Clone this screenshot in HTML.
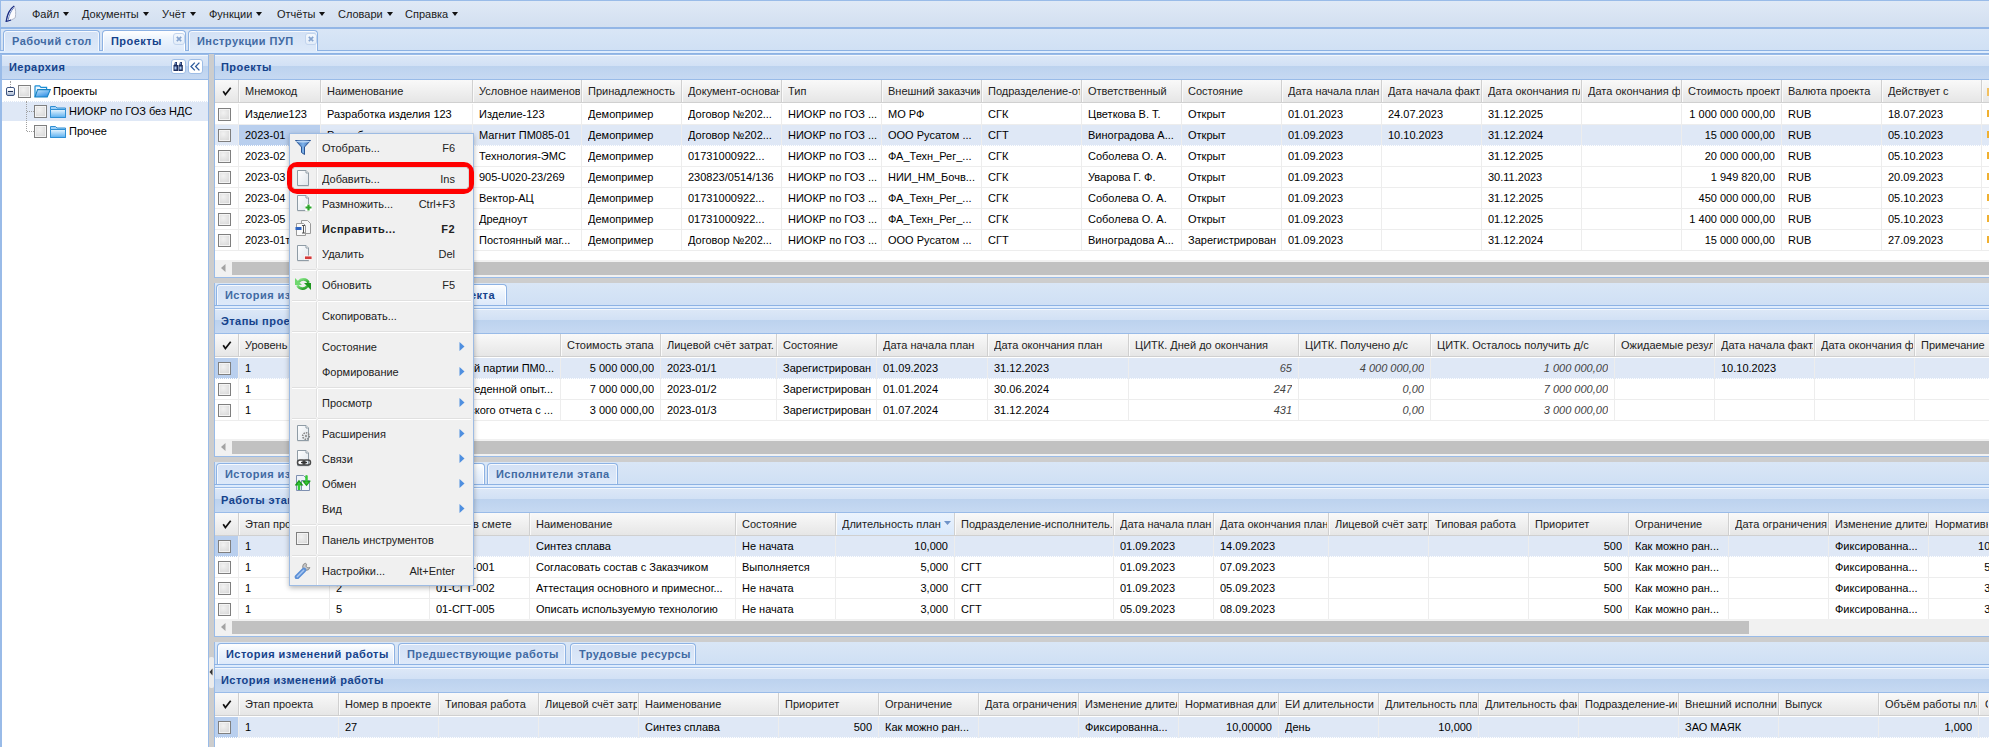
<!DOCTYPE html><html><head><meta charset="utf-8"><style>
*{margin:0;padding:0;box-sizing:border-box}
html,body{width:1989px;height:747px;overflow:hidden;background:#cdcdcd;font-family:"Liberation Sans",sans-serif;font-size:11px;color:#000}
body>div{position:absolute}
.t{position:absolute;white-space:nowrap;line-height:13px;height:13px;overflow:hidden}
.b{font-weight:bold;letter-spacing:0.45px}
.hdr{background:linear-gradient(#dde8f7 0,#d2e1f5 44%,#bcd2ee 45%,#c6d9f2 100%);border-top:1px solid #99bbe8;border-bottom:1px solid #99bbe8;box-shadow:inset 0 1px 0 #f3f7fc}
.ghd{background:linear-gradient(#fafafa,#e8e8e8)}
.cb{position:absolute;width:13px;height:13px;border:1px solid #7f7f7f;background:radial-gradient(circle at 40% 35%,#f2f2f2,#d6d6d6 90%);box-shadow:inset 0 0 0 1px #f4f4f4}
.arr{display:inline-block;width:0;height:0;border-left:3.5px solid transparent;border-right:3.5px solid transparent;border-top:4px solid #111;margin-left:4px;vertical-align:2px}
.tab{position:absolute;border:1px solid #8db2e3;border-bottom:none;border-radius:4px 4px 0 0;background:linear-gradient(#d3e1f5,#dde9f9);box-shadow:inset 0 1px 0 #f7fafe,inset 1px 0 0 #f3f7fd,inset -1px 0 0 #f3f7fd}
.tab.act{background:linear-gradient(#ffffff 0,#eef5fd 35%,#dde9fa 100%);box-shadow:inset 1px 0 0 #fff,inset -1px 0 0 #fff}
.tabt{position:absolute;white-space:nowrap;line-height:13px;font-weight:bold;letter-spacing:0.45px;color:#416aa3}
.act .tabt{color:#15428b}
.strip{background:linear-gradient(#d7e4f5,#cfdff4)}
.sb{background:#f1f1f1}
.thumb{background:#c1c1c1}
</style></head><body>
<div style="left:0px;top:0px;width:1989px;height:29px;background:linear-gradient(#dfe9f6,#d2dff0);border:1px solid #99bbe8;border-bottom:2px solid #93b6e6;border-right:none"></div>
<svg style="position:absolute;left:0;top:0" width="24" height="26" viewBox="0 0 24 26"><path d="M14.2 6 C10.5 8.5 7.2 14 6.2 21.3 C9.5 20.8 13 19.6 15.3 17.6 C15.9 13.5 15.9 9.5 14.2 6 Z" fill="#fbfbfe" stroke="#a9b1c4" stroke-width="0.9"/><path d="M14.2 6 C10.5 8.5 7.2 14 6.2 21.3 C8 21 9.5 20.6 11 20" fill="none" stroke="#1b2c84" stroke-width="1.3"/><path d="M13.6 8 C11 11 9 15 8.3 19.8" fill="none" stroke="#5877b8" stroke-width="0.9"/></svg>
<div class="t" style="left:32px;top:8px;text-align:left;color:#1a1a1a;overflow:visible">Файл<span class="arr"></span></div>
<div class="t" style="left:82px;top:8px;text-align:left;color:#1a1a1a;overflow:visible">Документы<span class="arr"></span></div>
<div class="t" style="left:162px;top:8px;text-align:left;color:#1a1a1a;overflow:visible">Учёт<span class="arr"></span></div>
<div class="t" style="left:209px;top:8px;text-align:left;color:#1a1a1a;overflow:visible">Функции<span class="arr"></span></div>
<div class="t" style="left:277px;top:8px;text-align:left;color:#1a1a1a;overflow:visible">Отчёты<span class="arr"></span></div>
<div class="t" style="left:338px;top:8px;text-align:left;color:#1a1a1a;overflow:visible">Словари<span class="arr"></span></div>
<div class="t" style="left:405px;top:8px;text-align:left;color:#1a1a1a;overflow:visible">Справка<span class="arr"></span></div>
<div style="left:0px;top:29px;width:1989px;height:25px;background:linear-gradient(#d9e6f6,#cedff4);border-left:1px solid #99bbe8"></div>
<div style="left:0px;top:50px;width:1989px;height:1px;background:#8db2e3"></div>
<div style="left:0px;top:51px;width:1989px;height:2px;background:#deecfd"></div>
<div style="left:0px;top:53px;width:1989px;height:1px;background:#8db2e3"></div>
<div class="tab" style="left:3px;top:30px;width:97px;height:21px"><div class="tabt" style="left:8px;top:4px">Рабочий стол</div></div>
<div class="tab act" style="left:102px;top:30px;width:84px;height:21px"><div class="tabt" style="left:8px;top:4px">Проекты</div><div style="position:absolute;left:70px;top:2px;width:12px;height:12px;border:1px solid #c3d5ee;border-radius:3px;background:linear-gradient(#f4f8fd,#e3edf9)"></div><svg style="position:absolute;left:73px;top:5px" width="6" height="6" viewBox="0 0 6 6"><path d="M0.8 0.8 L5.2 5.2 M5.2 0.8 L0.8 5.2" stroke="#86a4cf" stroke-width="1.7"/></svg></div>
<div class="tab" style="left:188px;top:30px;width:130px;height:21px"><div class="tabt" style="left:8px;top:4px">Инструкции ПУП</div><div style="position:absolute;left:116px;top:2px;width:12px;height:12px;border:1px solid #c3d5ee;border-radius:3px;background:linear-gradient(#f4f8fd,#e3edf9)"></div><svg style="position:absolute;left:119px;top:5px" width="6" height="6" viewBox="0 0 6 6"><path d="M0.8 0.8 L5.2 5.2 M5.2 0.8 L0.8 5.2" stroke="#86a4cf" stroke-width="1.7"/></svg></div>
<div style="left:0px;top:54px;width:209px;height:693px;background:#fff;border-left:2px solid #99bbe8;border-right:1px solid #99bbe8"></div>
<div class="hdr" style="left:0px;top:54px;width:209px;height:26px;border-left:2px solid #99bbe8;border-right:1px solid #99bbe8"></div>
<div class="t b" style="left:9px;top:61px;text-align:left;color:#15428b">Иерархия</div>
<div style="left:171px;top:59px;width:15px;height:15px;background:#fff;border:1px solid #9ebde6;border-radius:3px"></div>
<div style="left:188px;top:59px;width:15px;height:15px;background:#fff;border:1px solid #9ebde6;border-radius:3px"></div>
<svg style="position:absolute;left:173px;top:61px" width="11" height="11" viewBox="0 0 11 11"><path d="M2 1 H4 V4 H5 V10 H0.5 V4 H1.2 Z" fill="#1d2d5c"/><path d="M7 1 H9 V4 H9.8 V10 H5.5 V4 H6.2 Z" fill="#1d2d5c"/><rect x="1.5" y="5.5" width="2" height="3" fill="#a9c8f2"/><rect x="6.5" y="5.5" width="2" height="3" fill="#a9c8f2"/><rect x="2" y="1.5" width="1.2" height="2" fill="#6f8fc8"/><rect x="7" y="1.5" width="1.2" height="2" fill="#6f8fc8"/></svg>
<svg style="position:absolute;left:190px;top:62px" width="11" height="9" viewBox="0 0 11 9"><path d="M4.8 0.6 L1 4.5 L4.8 8.4 M9.4 0.6 L5.6 4.5 L9.4 8.4" fill="none" stroke="#2f5c9c" stroke-width="1.3"/></svg>
<div style="left:2px;top:101px;width:206px;height:20px;background:#dfe8f6;border-top:1px dotted #fff"></div>
<div style="left:10px;top:81px;width:1px;height:6px;border-left:1px dotted #a0a0a0"></div>
<div style="left:26px;top:101px;width:1px;height:30px;border-left:1px dotted #a0a0a0"></div>
<div style="left:27px;top:111px;width:7px;height:1px;border-top:1px dotted #a0a0a0"></div>
<div style="left:27px;top:131px;width:7px;height:1px;border-top:1px dotted #a0a0a0"></div>
<div style="left:6px;top:87px;width:9px;height:9px;border:1px solid #3f5682;background:linear-gradient(#ffffff 20%,#a9b9d2);border-radius:2px"><div style="position:absolute;left:1px;top:3px;width:5px;height:1px;background:#1d2f55"></div></div>
<div class="cb" style="left:18px;top:85px"></div>
<svg style="position:absolute;left:34px;top:85px" width="17" height="13" viewBox="0 0 17 13"><defs><linearGradient id="fo" x1="0" y1="0" x2="0.6" y2="1"><stop offset="0" stop-color="#cbe9fd"/><stop offset="1" stop-color="#3592e6"/></linearGradient></defs><path d="M1 12 V1.6 Q1 0.8 1.8 0.8 H5.6 L7 2.3 H12.6 V4.6" fill="#eaf5fe" stroke="#1b8ed6" stroke-width="1.2"/><path d="M1 12 L3.6 4.6 H16.3 L13.2 12 Z" fill="url(#fo)" stroke="#1683c4" stroke-width="1.1"/></svg>
<div class="t" style="left:53px;top:85px;text-align:left;">Проекты</div>
<div class="cb" style="left:34px;top:105px"></div>
<svg style="position:absolute;left:50px;top:105px" width="16" height="13" viewBox="0 0 16 13"><path d="M0.5 1.5 h5 l1.5 1.5 h8.5 v9.5 h-15 z" fill="#9fd0f7" stroke="#2f8fd4" stroke-width="1"/><path d="M0.5 4.5 h15 v8 h-15 z" fill="url(#fg)" stroke="#2f8fd4" stroke-width="1"/><defs><linearGradient id="fg" x1="0" y1="0" x2="0" y2="1"><stop offset="0" stop-color="#e9f5fe"/><stop offset="1" stop-color="#5ab0f0"/></linearGradient></defs></svg>
<div class="t" style="left:69px;top:105px;text-align:left;">НИОКР по ГОЗ без НДС</div>
<div class="cb" style="left:34px;top:125px"></div>
<svg style="position:absolute;left:50px;top:125px" width="16" height="13" viewBox="0 0 16 13"><path d="M0.5 1.5 h5 l1.5 1.5 h8.5 v9.5 h-15 z" fill="#9fd0f7" stroke="#2f8fd4" stroke-width="1"/><path d="M0.5 4.5 h15 v8 h-15 z" fill="url(#fg)" stroke="#2f8fd4" stroke-width="1"/><defs><linearGradient id="fg" x1="0" y1="0" x2="0" y2="1"><stop offset="0" stop-color="#e9f5fe"/><stop offset="1" stop-color="#5ab0f0"/></linearGradient></defs></svg>
<div class="t" style="left:69px;top:125px;text-align:left;">Прочее</div>
<div style="left:209px;top:54px;width:5px;height:693px;background:#cdcdcd"></div>
<div style="left:214px;top:54px;width:1775px;height:224px;background:#fff;border-left:1px solid #99bbe8;border-bottom:1px solid #99bbe8"></div>
<div class="hdr" style="left:214px;top:54px;width:1775px;height:26px;border-left:1px solid #99bbe8"></div>
<div class="t b" style="left:221px;top:61px;text-align:left;color:#15428b">Проекты</div>
<div style="left:215px;top:80px;width:1774px;height:23px;background:linear-gradient(#f9f9f9,#e6e6e6);border-bottom:1px solid #d0d0d0"></div>
<div style="left:238px;top:80px;width:1px;height:22px;background:#d0d0d0;box-shadow:1px 0 0 #fafafa"></div>
<div style="left:320px;top:80px;width:1px;height:22px;background:#d0d0d0;box-shadow:1px 0 0 #fafafa"></div>
<div style="left:472px;top:80px;width:1px;height:22px;background:#d0d0d0;box-shadow:1px 0 0 #fafafa"></div>
<div style="left:581px;top:80px;width:1px;height:22px;background:#d0d0d0;box-shadow:1px 0 0 #fafafa"></div>
<div style="left:681px;top:80px;width:1px;height:22px;background:#d0d0d0;box-shadow:1px 0 0 #fafafa"></div>
<div style="left:781px;top:80px;width:1px;height:22px;background:#d0d0d0;box-shadow:1px 0 0 #fafafa"></div>
<div style="left:881px;top:80px;width:1px;height:22px;background:#d0d0d0;box-shadow:1px 0 0 #fafafa"></div>
<div style="left:981px;top:80px;width:1px;height:22px;background:#d0d0d0;box-shadow:1px 0 0 #fafafa"></div>
<div style="left:1081px;top:80px;width:1px;height:22px;background:#d0d0d0;box-shadow:1px 0 0 #fafafa"></div>
<div style="left:1181px;top:80px;width:1px;height:22px;background:#d0d0d0;box-shadow:1px 0 0 #fafafa"></div>
<div style="left:1281px;top:80px;width:1px;height:22px;background:#d0d0d0;box-shadow:1px 0 0 #fafafa"></div>
<div style="left:1381px;top:80px;width:1px;height:22px;background:#d0d0d0;box-shadow:1px 0 0 #fafafa"></div>
<div style="left:1481px;top:80px;width:1px;height:22px;background:#d0d0d0;box-shadow:1px 0 0 #fafafa"></div>
<div style="left:1581px;top:80px;width:1px;height:22px;background:#d0d0d0;box-shadow:1px 0 0 #fafafa"></div>
<div style="left:1681px;top:80px;width:1px;height:22px;background:#d0d0d0;box-shadow:1px 0 0 #fafafa"></div>
<div style="left:1781px;top:80px;width:1px;height:22px;background:#d0d0d0;box-shadow:1px 0 0 #fafafa"></div>
<div style="left:1881px;top:80px;width:1px;height:22px;background:#d0d0d0;box-shadow:1px 0 0 #fafafa"></div>
<div style="left:1981px;top:80px;width:1px;height:22px;background:#d0d0d0;box-shadow:1px 0 0 #fafafa"></div>
<svg style="position:absolute;left:222px;top:86px" width="10" height="10" viewBox="0 0 10 10"><path d="M1.2 5.2 L3.4 8.5 L8.7 1.8" fill="none" stroke="#111" stroke-width="1.7"/></svg>
<div class="t" style="left:245px;top:85px;width:74px;text-align:left;color:#222">Мнемокод</div>
<div class="t" style="left:327px;top:85px;width:144px;text-align:left;color:#222">Наименование</div>
<div class="t" style="left:479px;top:85px;width:101px;text-align:left;color:#222">Условное наименование</div>
<div class="t" style="left:588px;top:85px;width:92px;text-align:left;color:#222">Принадлежность</div>
<div class="t" style="left:688px;top:85px;width:92px;text-align:left;color:#222">Документ-основание</div>
<div class="t" style="left:788px;top:85px;width:92px;text-align:left;color:#222">Тип</div>
<div class="t" style="left:888px;top:85px;width:92px;text-align:left;color:#222">Внешний заказчик</div>
<div class="t" style="left:988px;top:85px;width:92px;text-align:left;color:#222">Подразделение-ответственный</div>
<div class="t" style="left:1088px;top:85px;width:92px;text-align:left;color:#222">Ответственный</div>
<div class="t" style="left:1188px;top:85px;width:92px;text-align:left;color:#222">Состояние</div>
<div class="t" style="left:1288px;top:85px;width:92px;text-align:left;color:#222">Дата начала план.</div>
<div class="t" style="left:1388px;top:85px;width:92px;text-align:left;color:#222">Дата начала факт.</div>
<div class="t" style="left:1488px;top:85px;width:92px;text-align:left;color:#222">Дата окончания план</div>
<div class="t" style="left:1588px;top:85px;width:92px;text-align:left;color:#222">Дата окончания факт</div>
<div class="t" style="left:1688px;top:85px;width:92px;text-align:left;color:#222">Стоимость проекта</div>
<div class="t" style="left:1788px;top:85px;width:92px;text-align:left;color:#222">Валюта проекта</div>
<div class="t" style="left:1888px;top:85px;width:92px;text-align:left;color:#222">Действует с</div>
<div style="left:215px;top:104px;width:1774px;height:21px;border-bottom:1px solid #ededed"></div>
<div class="cb" style="left:218px;top:108px"></div>
<div class="t" style="left:245px;top:108px;width:74px;text-align:left;color:#000">Изделие123</div>
<div class="t" style="left:327px;top:108px;width:144px;text-align:left;color:#000">Разработка изделия 123</div>
<div class="t" style="left:479px;top:108px;width:101px;text-align:left;color:#000">Изделие-123</div>
<div class="t" style="left:588px;top:108px;width:92px;text-align:left;color:#000">Демопример</div>
<div class="t" style="left:688px;top:108px;width:92px;text-align:left;color:#000">Договор №202...</div>
<div class="t" style="left:788px;top:108px;width:92px;text-align:left;color:#000">НИОКР по ГОЗ ...</div>
<div class="t" style="left:888px;top:108px;width:92px;text-align:left;color:#000">МО РФ</div>
<div class="t" style="left:988px;top:108px;width:92px;text-align:left;color:#000">СГК</div>
<div class="t" style="left:1088px;top:108px;width:92px;text-align:left;color:#000">Цветкова В. Т.</div>
<div class="t" style="left:1188px;top:108px;width:92px;text-align:left;color:#000">Открыт</div>
<div class="t" style="left:1288px;top:108px;width:92px;text-align:left;color:#000">01.01.2023</div>
<div class="t" style="left:1388px;top:108px;width:92px;text-align:left;color:#000">24.07.2023</div>
<div class="t" style="left:1488px;top:108px;width:92px;text-align:left;color:#000">31.12.2025</div>
<div class="t" style="left:1682px;top:108px;width:93px;text-align:right;color:#000">1 000 000 000,00</div>
<div class="t" style="left:1788px;top:108px;width:92px;text-align:left;color:#000">RUB</div>
<div class="t" style="left:1888px;top:108px;width:92px;text-align:left;color:#000">18.07.2023</div>
<div style="left:215px;top:125px;width:1774px;height:21px;background:#dfe8f6;border-bottom:1px dotted #ffffff"></div>
<div style="left:239px;top:125px;width:81px;height:21px;background:#b9cfee;border-bottom:1px dotted #ffffff"></div>
<div class="cb" style="left:218px;top:129px"></div>
<div class="t" style="left:245px;top:129px;width:74px;text-align:left;color:#000">2023-01</div>
<div class="t" style="left:327px;top:129px;width:144px;text-align:left;color:#000">Разработка магнитов</div>
<div class="t" style="left:479px;top:129px;width:101px;text-align:left;color:#000">Магнит ПМ085-01</div>
<div class="t" style="left:588px;top:129px;width:92px;text-align:left;color:#000">Демопример</div>
<div class="t" style="left:688px;top:129px;width:92px;text-align:left;color:#000">Договор №202...</div>
<div class="t" style="left:788px;top:129px;width:92px;text-align:left;color:#000">НИОКР по ГОЗ ...</div>
<div class="t" style="left:888px;top:129px;width:92px;text-align:left;color:#000">ООО Русатом ...</div>
<div class="t" style="left:988px;top:129px;width:92px;text-align:left;color:#000">СГТ</div>
<div class="t" style="left:1088px;top:129px;width:92px;text-align:left;color:#000">Виноградова А...</div>
<div class="t" style="left:1188px;top:129px;width:92px;text-align:left;color:#000">Открыт</div>
<div class="t" style="left:1288px;top:129px;width:92px;text-align:left;color:#000">01.09.2023</div>
<div class="t" style="left:1388px;top:129px;width:92px;text-align:left;color:#000">10.10.2023</div>
<div class="t" style="left:1488px;top:129px;width:92px;text-align:left;color:#000">31.12.2024</div>
<div class="t" style="left:1682px;top:129px;width:93px;text-align:right;color:#000">15 000 000,00</div>
<div class="t" style="left:1788px;top:129px;width:92px;text-align:left;color:#000">RUB</div>
<div class="t" style="left:1888px;top:129px;width:92px;text-align:left;color:#000">05.10.2023</div>
<div style="left:215px;top:146px;width:1774px;height:21px;border-bottom:1px solid #ededed"></div>
<div class="cb" style="left:218px;top:150px"></div>
<div class="t" style="left:245px;top:150px;width:74px;text-align:left;color:#000">2023-02</div>
<div class="t" style="left:327px;top:150px;width:144px;text-align:left;color:#000">Технология</div>
<div class="t" style="left:479px;top:150px;width:101px;text-align:left;color:#000">Технология-ЭМС</div>
<div class="t" style="left:588px;top:150px;width:92px;text-align:left;color:#000">Демопример</div>
<div class="t" style="left:688px;top:150px;width:92px;text-align:left;color:#000">01731000922...</div>
<div class="t" style="left:788px;top:150px;width:92px;text-align:left;color:#000">НИОКР по ГОЗ ...</div>
<div class="t" style="left:888px;top:150px;width:92px;text-align:left;color:#000">ФА_Техн_Рег_...</div>
<div class="t" style="left:988px;top:150px;width:92px;text-align:left;color:#000">СГК</div>
<div class="t" style="left:1088px;top:150px;width:92px;text-align:left;color:#000">Соболева О. А.</div>
<div class="t" style="left:1188px;top:150px;width:92px;text-align:left;color:#000">Открыт</div>
<div class="t" style="left:1288px;top:150px;width:92px;text-align:left;color:#000">01.09.2023</div>
<div class="t" style="left:1488px;top:150px;width:92px;text-align:left;color:#000">31.12.2025</div>
<div class="t" style="left:1682px;top:150px;width:93px;text-align:right;color:#000">20 000 000,00</div>
<div class="t" style="left:1788px;top:150px;width:92px;text-align:left;color:#000">RUB</div>
<div class="t" style="left:1888px;top:150px;width:92px;text-align:left;color:#000">05.10.2023</div>
<div style="left:215px;top:167px;width:1774px;height:21px;border-bottom:1px solid #ededed"></div>
<div class="cb" style="left:218px;top:171px"></div>
<div class="t" style="left:245px;top:171px;width:74px;text-align:left;color:#000">2023-03</div>
<div class="t" style="left:327px;top:171px;width:144px;text-align:left;color:#000">Разработка</div>
<div class="t" style="left:479px;top:171px;width:101px;text-align:left;color:#000">905-U020-23/269</div>
<div class="t" style="left:588px;top:171px;width:92px;text-align:left;color:#000">Демопример</div>
<div class="t" style="left:688px;top:171px;width:92px;text-align:left;color:#000">230823/0514/136</div>
<div class="t" style="left:788px;top:171px;width:92px;text-align:left;color:#000">НИОКР по ГОЗ ...</div>
<div class="t" style="left:888px;top:171px;width:92px;text-align:left;color:#000">НИИ_НМ_Бочв...</div>
<div class="t" style="left:988px;top:171px;width:92px;text-align:left;color:#000">СГК</div>
<div class="t" style="left:1088px;top:171px;width:92px;text-align:left;color:#000">Уварова Г. Ф.</div>
<div class="t" style="left:1188px;top:171px;width:92px;text-align:left;color:#000">Открыт</div>
<div class="t" style="left:1288px;top:171px;width:92px;text-align:left;color:#000">01.09.2023</div>
<div class="t" style="left:1488px;top:171px;width:92px;text-align:left;color:#000">30.11.2023</div>
<div class="t" style="left:1682px;top:171px;width:93px;text-align:right;color:#000">1 949 820,00</div>
<div class="t" style="left:1788px;top:171px;width:92px;text-align:left;color:#000">RUB</div>
<div class="t" style="left:1888px;top:171px;width:92px;text-align:left;color:#000">20.09.2023</div>
<div style="left:215px;top:188px;width:1774px;height:21px;border-bottom:1px solid #ededed"></div>
<div class="cb" style="left:218px;top:192px"></div>
<div class="t" style="left:245px;top:192px;width:74px;text-align:left;color:#000">2023-04</div>
<div class="t" style="left:327px;top:192px;width:144px;text-align:left;color:#000">Разработка</div>
<div class="t" style="left:479px;top:192px;width:101px;text-align:left;color:#000">Вектор-АЦ</div>
<div class="t" style="left:588px;top:192px;width:92px;text-align:left;color:#000">Демопример</div>
<div class="t" style="left:688px;top:192px;width:92px;text-align:left;color:#000">01731000922...</div>
<div class="t" style="left:788px;top:192px;width:92px;text-align:left;color:#000">НИОКР по ГОЗ ...</div>
<div class="t" style="left:888px;top:192px;width:92px;text-align:left;color:#000">ФА_Техн_Рег_...</div>
<div class="t" style="left:988px;top:192px;width:92px;text-align:left;color:#000">СГК</div>
<div class="t" style="left:1088px;top:192px;width:92px;text-align:left;color:#000">Соболева О. А.</div>
<div class="t" style="left:1188px;top:192px;width:92px;text-align:left;color:#000">Открыт</div>
<div class="t" style="left:1288px;top:192px;width:92px;text-align:left;color:#000">01.09.2023</div>
<div class="t" style="left:1488px;top:192px;width:92px;text-align:left;color:#000">31.12.2025</div>
<div class="t" style="left:1682px;top:192px;width:93px;text-align:right;color:#000">450 000 000,00</div>
<div class="t" style="left:1788px;top:192px;width:92px;text-align:left;color:#000">RUB</div>
<div class="t" style="left:1888px;top:192px;width:92px;text-align:left;color:#000">05.10.2023</div>
<div style="left:215px;top:209px;width:1774px;height:21px;border-bottom:1px solid #ededed"></div>
<div class="cb" style="left:218px;top:213px"></div>
<div class="t" style="left:245px;top:213px;width:74px;text-align:left;color:#000">2023-05</div>
<div class="t" style="left:327px;top:213px;width:144px;text-align:left;color:#000">Разработка</div>
<div class="t" style="left:479px;top:213px;width:101px;text-align:left;color:#000">Дредноут</div>
<div class="t" style="left:588px;top:213px;width:92px;text-align:left;color:#000">Демопример</div>
<div class="t" style="left:688px;top:213px;width:92px;text-align:left;color:#000">01731000922...</div>
<div class="t" style="left:788px;top:213px;width:92px;text-align:left;color:#000">НИОКР по ГОЗ ...</div>
<div class="t" style="left:888px;top:213px;width:92px;text-align:left;color:#000">ФА_Техн_Рег_...</div>
<div class="t" style="left:988px;top:213px;width:92px;text-align:left;color:#000">СГК</div>
<div class="t" style="left:1088px;top:213px;width:92px;text-align:left;color:#000">Соболева О. А.</div>
<div class="t" style="left:1188px;top:213px;width:92px;text-align:left;color:#000">Открыт</div>
<div class="t" style="left:1288px;top:213px;width:92px;text-align:left;color:#000">01.09.2023</div>
<div class="t" style="left:1488px;top:213px;width:92px;text-align:left;color:#000">01.12.2025</div>
<div class="t" style="left:1682px;top:213px;width:93px;text-align:right;color:#000">1 400 000 000,00</div>
<div class="t" style="left:1788px;top:213px;width:92px;text-align:left;color:#000">RUB</div>
<div class="t" style="left:1888px;top:213px;width:92px;text-align:left;color:#000">05.10.2023</div>
<div style="left:215px;top:230px;width:1774px;height:21px;border-bottom:1px solid #ededed"></div>
<div class="cb" style="left:218px;top:234px"></div>
<div class="t" style="left:245px;top:234px;width:74px;text-align:left;color:#000">2023-01т</div>
<div class="t" style="left:327px;top:234px;width:144px;text-align:left;color:#000">Разработка</div>
<div class="t" style="left:479px;top:234px;width:101px;text-align:left;color:#000">Постоянный маг...</div>
<div class="t" style="left:588px;top:234px;width:92px;text-align:left;color:#000">Демопример</div>
<div class="t" style="left:688px;top:234px;width:92px;text-align:left;color:#000">Договор №202...</div>
<div class="t" style="left:788px;top:234px;width:92px;text-align:left;color:#000">НИОКР по ГОЗ ...</div>
<div class="t" style="left:888px;top:234px;width:92px;text-align:left;color:#000">ООО Русатом ...</div>
<div class="t" style="left:988px;top:234px;width:92px;text-align:left;color:#000">СГТ</div>
<div class="t" style="left:1088px;top:234px;width:92px;text-align:left;color:#000">Виноградова А...</div>
<div class="t" style="left:1188px;top:234px;width:92px;text-align:left;color:#000">Зарегистрирован</div>
<div class="t" style="left:1288px;top:234px;width:92px;text-align:left;color:#000">01.09.2023</div>
<div class="t" style="left:1488px;top:234px;width:92px;text-align:left;color:#000">31.12.2024</div>
<div class="t" style="left:1682px;top:234px;width:93px;text-align:right;color:#000">15 000 000,00</div>
<div class="t" style="left:1788px;top:234px;width:92px;text-align:left;color:#000">RUB</div>
<div class="t" style="left:1888px;top:234px;width:92px;text-align:left;color:#000">27.09.2023</div>
<div style="left:238px;top:104px;width:1px;height:147px;background:#ededed"></div>
<div style="left:320px;top:104px;width:1px;height:147px;background:#ededed"></div>
<div style="left:472px;top:104px;width:1px;height:147px;background:#ededed"></div>
<div style="left:581px;top:104px;width:1px;height:147px;background:#ededed"></div>
<div style="left:681px;top:104px;width:1px;height:147px;background:#ededed"></div>
<div style="left:781px;top:104px;width:1px;height:147px;background:#ededed"></div>
<div style="left:881px;top:104px;width:1px;height:147px;background:#ededed"></div>
<div style="left:981px;top:104px;width:1px;height:147px;background:#ededed"></div>
<div style="left:1081px;top:104px;width:1px;height:147px;background:#ededed"></div>
<div style="left:1181px;top:104px;width:1px;height:147px;background:#ededed"></div>
<div style="left:1281px;top:104px;width:1px;height:147px;background:#ededed"></div>
<div style="left:1381px;top:104px;width:1px;height:147px;background:#ededed"></div>
<div style="left:1481px;top:104px;width:1px;height:147px;background:#ededed"></div>
<div style="left:1581px;top:104px;width:1px;height:147px;background:#ededed"></div>
<div style="left:1681px;top:104px;width:1px;height:147px;background:#ededed"></div>
<div style="left:1781px;top:104px;width:1px;height:147px;background:#ededed"></div>
<div style="left:1881px;top:104px;width:1px;height:147px;background:#ededed"></div>
<div style="left:1981px;top:104px;width:1px;height:147px;background:#ededed"></div>
<div style="left:1987px;top:110px;width:2px;height:7px;background:#f0b030"></div>
<div style="left:1987px;top:131px;width:2px;height:7px;background:#f0b030"></div>
<div style="left:1987px;top:152px;width:2px;height:7px;background:#f0b030"></div>
<div style="left:1987px;top:173px;width:2px;height:7px;background:#f0b030"></div>
<div style="left:1987px;top:194px;width:2px;height:7px;background:#f0b030"></div>
<div style="left:1987px;top:215px;width:2px;height:7px;background:#f0b030"></div>
<div style="left:1987px;top:236px;width:2px;height:7px;background:#f0b030"></div>
<div style="left:1987px;top:88px;width:2px;height:8px;background:#f2c060"></div>
<div style="left:215px;top:260px;width:1774px;height:17px;background:#f1f1f1"></div>
<svg style="position:absolute;left:221px;top:264px" width="5" height="8" viewBox="0 0 5 8"><path d="M4.5 0 V8 L0 4 Z" fill="#a3a3a3"/></svg>
<div style="left:232px;top:262px;width:1757px;height:13px;background:#c1c1c1"></div>
<div style="left:214px;top:283px;width:1775px;height:25px;background:linear-gradient(#d9e6f6,#cedff4);border-left:1px solid #99bbe8"></div>
<div style="left:214px;top:305px;width:1775px;height:1px;background:#8db2e3"></div>
<div style="left:215px;top:306px;width:1774px;height:2px;background:#deecfd"></div>
<div class="tab" style="left:216px;top:284px;width:120px;height:21px"><div class="tabt" style="left:8px;top:4px">История изменений</div></div>
<div class="tab act" style="left:339px;top:284px;width:168px;height:21px"><div class="tabt" style="right:11px;top:4px">Этапы проекта</div></div>
<div style="left:214px;top:308px;width:1775px;height:149px;background:#fff;border-left:1px solid #99bbe8;border-bottom:1px solid #99bbe8"></div>
<div class="hdr" style="left:214px;top:308px;width:1775px;height:26px;border-left:1px solid #99bbe8"></div>
<div class="t b" style="left:221px;top:315px;text-align:left;color:#15428b">Этапы проекта</div>
<div style="left:215px;top:334px;width:1774px;height:23px;background:linear-gradient(#f9f9f9,#e6e6e6);border-bottom:1px solid #d0d0d0"></div>
<div style="left:238px;top:334px;width:1px;height:22px;background:#d0d0d0;box-shadow:1px 0 0 #fafafa"></div>
<div style="left:338px;top:334px;width:1px;height:22px;background:#d0d0d0;box-shadow:1px 0 0 #fafafa"></div>
<div style="left:560px;top:334px;width:1px;height:22px;background:#d0d0d0;box-shadow:1px 0 0 #fafafa"></div>
<div style="left:660px;top:334px;width:1px;height:22px;background:#d0d0d0;box-shadow:1px 0 0 #fafafa"></div>
<div style="left:776px;top:334px;width:1px;height:22px;background:#d0d0d0;box-shadow:1px 0 0 #fafafa"></div>
<div style="left:876px;top:334px;width:1px;height:22px;background:#d0d0d0;box-shadow:1px 0 0 #fafafa"></div>
<div style="left:987px;top:334px;width:1px;height:22px;background:#d0d0d0;box-shadow:1px 0 0 #fafafa"></div>
<div style="left:1128px;top:334px;width:1px;height:22px;background:#d0d0d0;box-shadow:1px 0 0 #fafafa"></div>
<div style="left:1298px;top:334px;width:1px;height:22px;background:#d0d0d0;box-shadow:1px 0 0 #fafafa"></div>
<div style="left:1430px;top:334px;width:1px;height:22px;background:#d0d0d0;box-shadow:1px 0 0 #fafafa"></div>
<div style="left:1614px;top:334px;width:1px;height:22px;background:#d0d0d0;box-shadow:1px 0 0 #fafafa"></div>
<div style="left:1714px;top:334px;width:1px;height:22px;background:#d0d0d0;box-shadow:1px 0 0 #fafafa"></div>
<div style="left:1814px;top:334px;width:1px;height:22px;background:#d0d0d0;box-shadow:1px 0 0 #fafafa"></div>
<div style="left:1914px;top:334px;width:1px;height:22px;background:#d0d0d0;box-shadow:1px 0 0 #fafafa"></div>
<svg style="position:absolute;left:222px;top:340px" width="10" height="10" viewBox="0 0 10 10"><path d="M1.2 5.2 L3.4 8.5 L8.7 1.8" fill="none" stroke="#111" stroke-width="1.7"/></svg>
<div class="t" style="left:245px;top:339px;width:92px;text-align:left;color:#222">Уровень</div>
<div class="t" style="left:345px;top:339px;width:214px;text-align:left;color:#222">Наименование</div>
<div class="t" style="left:567px;top:339px;width:92px;text-align:left;color:#222">Стоимость этапа</div>
<div class="t" style="left:667px;top:339px;width:108px;text-align:left;color:#222">Лицевой счёт затрат.</div>
<div class="t" style="left:783px;top:339px;width:92px;text-align:left;color:#222">Состояние</div>
<div class="t" style="left:883px;top:339px;width:103px;text-align:left;color:#222">Дата начала план</div>
<div class="t" style="left:994px;top:339px;width:133px;text-align:left;color:#222">Дата окончания план</div>
<div class="t" style="left:1135px;top:339px;width:162px;text-align:left;color:#222">ЦИТК. Дней до окончания</div>
<div class="t" style="left:1305px;top:339px;width:124px;text-align:left;color:#222">ЦИТК. Получено д/с</div>
<div class="t" style="left:1437px;top:339px;width:176px;text-align:left;color:#222">ЦИТК. Осталось получить д/с</div>
<div class="t" style="left:1621px;top:339px;width:92px;text-align:left;color:#222">Ожидаемые результаты</div>
<div class="t" style="left:1721px;top:339px;width:92px;text-align:left;color:#222">Дата начала факт.</div>
<div class="t" style="left:1821px;top:339px;width:92px;text-align:left;color:#222">Дата окончания факт</div>
<div class="t" style="left:1921px;top:339px;width:67px;text-align:left;color:#222">Примечание</div>
<div style="left:215px;top:358px;width:1774px;height:21px;background:#dfe8f6;border-bottom:1px dotted #ffffff"></div>
<div style="left:215px;top:358px;width:23px;height:21px;background:#b9cfee;border-bottom:1px dotted #ffffff"></div>
<div class="cb" style="left:218px;top:362px"></div>
<div class="t" style="left:245px;top:362px;width:92px;text-align:left;color:#000">1</div>
<div class="t" style="left:339px;top:362px;width:215px;text-align:right;color:#000">Изготовление опытной партии ПМ0...</div>
<div class="t" style="left:561px;top:362px;width:93px;text-align:right;color:#000">5 000 000,00</div>
<div class="t" style="left:667px;top:362px;width:108px;text-align:left;color:#000">2023-01/1</div>
<div class="t" style="left:783px;top:362px;width:92px;text-align:left;color:#000">Зарегистрирован</div>
<div class="t" style="left:883px;top:362px;width:103px;text-align:left;color:#000">01.09.2023</div>
<div class="t" style="left:994px;top:362px;width:133px;text-align:left;color:#000">31.12.2023</div>
<div class="t" style="left:1129px;top:362px;width:163px;text-align:right;color:#444;font-style:italic">65</div>
<div class="t" style="left:1299px;top:362px;width:125px;text-align:right;color:#444;font-style:italic">4 000 000,00</div>
<div class="t" style="left:1431px;top:362px;width:177px;text-align:right;color:#444;font-style:italic">1 000 000,00</div>
<div class="t" style="left:1721px;top:362px;width:92px;text-align:left;color:#000">10.10.2023</div>
<div style="left:215px;top:379px;width:1774px;height:21px;border-bottom:1px solid #ededed"></div>
<div class="cb" style="left:218px;top:383px"></div>
<div class="t" style="left:245px;top:383px;width:92px;text-align:left;color:#000">1</div>
<div class="t" style="left:339px;top:383px;width:214px;text-align:right;color:#000">Испытания проведенной опыт...</div>
<div class="t" style="left:561px;top:383px;width:93px;text-align:right;color:#000">7 000 000,00</div>
<div class="t" style="left:667px;top:383px;width:108px;text-align:left;color:#000">2023-01/2</div>
<div class="t" style="left:783px;top:383px;width:92px;text-align:left;color:#000">Зарегистрирован</div>
<div class="t" style="left:883px;top:383px;width:103px;text-align:left;color:#000">01.01.2024</div>
<div class="t" style="left:994px;top:383px;width:133px;text-align:left;color:#000">30.06.2024</div>
<div class="t" style="left:1129px;top:383px;width:163px;text-align:right;color:#444;font-style:italic">247</div>
<div class="t" style="left:1299px;top:383px;width:125px;text-align:right;color:#444;font-style:italic">0,00</div>
<div class="t" style="left:1431px;top:383px;width:177px;text-align:right;color:#444;font-style:italic">7 000 000,00</div>
<div style="left:215px;top:400px;width:1774px;height:21px;border-bottom:1px solid #ededed"></div>
<div class="cb" style="left:218px;top:404px"></div>
<div class="t" style="left:245px;top:404px;width:92px;text-align:left;color:#000">1</div>
<div class="t" style="left:339px;top:404px;width:214px;text-align:right;color:#000">Выпуск научно-технического отчета с ...</div>
<div class="t" style="left:561px;top:404px;width:93px;text-align:right;color:#000">3 000 000,00</div>
<div class="t" style="left:667px;top:404px;width:108px;text-align:left;color:#000">2023-01/3</div>
<div class="t" style="left:783px;top:404px;width:92px;text-align:left;color:#000">Зарегистрирован</div>
<div class="t" style="left:883px;top:404px;width:103px;text-align:left;color:#000">01.07.2024</div>
<div class="t" style="left:994px;top:404px;width:133px;text-align:left;color:#000">31.12.2024</div>
<div class="t" style="left:1129px;top:404px;width:163px;text-align:right;color:#444;font-style:italic">431</div>
<div class="t" style="left:1299px;top:404px;width:125px;text-align:right;color:#444;font-style:italic">0,00</div>
<div class="t" style="left:1431px;top:404px;width:177px;text-align:right;color:#444;font-style:italic">3 000 000,00</div>
<div style="left:238px;top:358px;width:1px;height:63px;background:#ededed"></div>
<div style="left:338px;top:358px;width:1px;height:63px;background:#ededed"></div>
<div style="left:560px;top:358px;width:1px;height:63px;background:#ededed"></div>
<div style="left:660px;top:358px;width:1px;height:63px;background:#ededed"></div>
<div style="left:776px;top:358px;width:1px;height:63px;background:#ededed"></div>
<div style="left:876px;top:358px;width:1px;height:63px;background:#ededed"></div>
<div style="left:987px;top:358px;width:1px;height:63px;background:#ededed"></div>
<div style="left:1128px;top:358px;width:1px;height:63px;background:#ededed"></div>
<div style="left:1298px;top:358px;width:1px;height:63px;background:#ededed"></div>
<div style="left:1430px;top:358px;width:1px;height:63px;background:#ededed"></div>
<div style="left:1614px;top:358px;width:1px;height:63px;background:#ededed"></div>
<div style="left:1714px;top:358px;width:1px;height:63px;background:#ededed"></div>
<div style="left:1814px;top:358px;width:1px;height:63px;background:#ededed"></div>
<div style="left:1914px;top:358px;width:1px;height:63px;background:#ededed"></div>
<div style="left:215px;top:439px;width:1774px;height:17px;background:#f1f1f1"></div>
<svg style="position:absolute;left:221px;top:443px" width="5" height="8" viewBox="0 0 5 8"><path d="M4.5 0 V8 L0 4 Z" fill="#a3a3a3"/></svg>
<div style="left:232px;top:441px;width:1757px;height:13px;background:#c1c1c1"></div>
<div style="left:214px;top:462px;width:1775px;height:25px;background:linear-gradient(#d9e6f6,#cedff4);border-left:1px solid #99bbe8"></div>
<div style="left:214px;top:484px;width:1775px;height:1px;background:#8db2e3"></div>
<div style="left:215px;top:485px;width:1774px;height:2px;background:#deecfd"></div>
<div class="tab" style="left:216px;top:463px;width:120px;height:21px"><div class="tabt" style="left:8px;top:4px">История изменений</div></div>
<div class="tab act" style="left:339px;top:463px;width:146px;height:21px"><div class="tabt" style="left:8px;top:4px">Работы этапа</div></div>
<div class="tab" style="left:487px;top:463px;width:131px;height:21px"><div class="tabt" style="left:8px;top:4px">Исполнители этапа</div></div>
<div style="left:214px;top:487px;width:1775px;height:150px;background:#fff;border-left:1px solid #99bbe8;border-bottom:1px solid #99bbe8"></div>
<div class="hdr" style="left:214px;top:487px;width:1775px;height:26px;border-left:1px solid #99bbe8"></div>
<div class="t b" style="left:221px;top:494px;text-align:left;color:#15428b">Работы этапа</div>
<div style="left:215px;top:513px;width:1774px;height:23px;background:linear-gradient(#f9f9f9,#e6e6e6);border-bottom:1px solid #d0d0d0"></div>
<div style="left:836px;top:513px;width:118px;height:22px;background:linear-gradient(#ebf3fd,#d9e8fb)"></div>
<div style="left:238px;top:513px;width:1px;height:22px;background:#d0d0d0;box-shadow:1px 0 0 #fafafa"></div>
<div style="left:329px;top:513px;width:1px;height:22px;background:#d0d0d0;box-shadow:1px 0 0 #fafafa"></div>
<div style="left:429px;top:513px;width:1px;height:22px;background:#d0d0d0;box-shadow:1px 0 0 #fafafa"></div>
<div style="left:529px;top:513px;width:1px;height:22px;background:#d0d0d0;box-shadow:1px 0 0 #fafafa"></div>
<div style="left:735px;top:513px;width:1px;height:22px;background:#d0d0d0;box-shadow:1px 0 0 #fafafa"></div>
<div style="left:835px;top:513px;width:1px;height:22px;background:#d0d0d0;box-shadow:1px 0 0 #fafafa"></div>
<div style="left:954px;top:513px;width:1px;height:22px;background:#d0d0d0;box-shadow:1px 0 0 #fafafa"></div>
<div style="left:1113px;top:513px;width:1px;height:22px;background:#d0d0d0;box-shadow:1px 0 0 #fafafa"></div>
<div style="left:1213px;top:513px;width:1px;height:22px;background:#d0d0d0;box-shadow:1px 0 0 #fafafa"></div>
<div style="left:1328px;top:513px;width:1px;height:22px;background:#d0d0d0;box-shadow:1px 0 0 #fafafa"></div>
<div style="left:1428px;top:513px;width:1px;height:22px;background:#d0d0d0;box-shadow:1px 0 0 #fafafa"></div>
<div style="left:1528px;top:513px;width:1px;height:22px;background:#d0d0d0;box-shadow:1px 0 0 #fafafa"></div>
<div style="left:1628px;top:513px;width:1px;height:22px;background:#d0d0d0;box-shadow:1px 0 0 #fafafa"></div>
<div style="left:1728px;top:513px;width:1px;height:22px;background:#d0d0d0;box-shadow:1px 0 0 #fafafa"></div>
<div style="left:1828px;top:513px;width:1px;height:22px;background:#d0d0d0;box-shadow:1px 0 0 #fafafa"></div>
<div style="left:1928px;top:513px;width:1px;height:22px;background:#d0d0d0;box-shadow:1px 0 0 #fafafa"></div>
<svg style="position:absolute;left:222px;top:519px" width="10" height="10" viewBox="0 0 10 10"><path d="M1.2 5.2 L3.4 8.5 L8.7 1.8" fill="none" stroke="#111" stroke-width="1.7"/></svg>
<div class="t" style="left:245px;top:518px;width:83px;text-align:left;color:#222">Этап проекта</div>
<div class="t" style="left:336px;top:518px;width:92px;text-align:left;color:#222">Номер в проекте</div>
<div class="t" style="left:436px;top:518px;width:92px;text-align:left;color:#222">Номер в смете</div>
<div class="t" style="left:536px;top:518px;width:198px;text-align:left;color:#222">Наименование</div>
<div class="t" style="left:742px;top:518px;width:92px;text-align:left;color:#222">Состояние</div>
<div class="t" style="left:842px;top:518px;width:111px;text-align:left;color:#222">Длительность план</div>
<div class="t" style="left:961px;top:518px;width:151px;text-align:left;color:#222">Подразделение-исполнитель...</div>
<div class="t" style="left:1120px;top:518px;width:92px;text-align:left;color:#222">Дата начала план.</div>
<div class="t" style="left:1220px;top:518px;width:107px;text-align:left;color:#222">Дата окончания план</div>
<div class="t" style="left:1335px;top:518px;width:92px;text-align:left;color:#222">Лицевой счёт затрат</div>
<div class="t" style="left:1435px;top:518px;width:92px;text-align:left;color:#222">Типовая работа</div>
<div class="t" style="left:1535px;top:518px;width:92px;text-align:left;color:#222">Приоритет</div>
<div class="t" style="left:1635px;top:518px;width:92px;text-align:left;color:#222">Ограничение</div>
<div class="t" style="left:1735px;top:518px;width:92px;text-align:left;color:#222">Дата ограничения</div>
<div class="t" style="left:1835px;top:518px;width:92px;text-align:left;color:#222">Изменение длительности</div>
<div class="t" style="left:1935px;top:518px;width:53px;text-align:left;color:#222">Нормативная длительность</div>
<svg style="position:absolute;left:944px;top:521px" width="7" height="4" viewBox="0 0 7 4"><path d="M0 0 H7 L3.5 4 Z" fill="#6f93c8"/></svg>
<div style="left:215px;top:536px;width:1774px;height:21px;background:#dfe8f6;border-bottom:1px dotted #ffffff"></div>
<div style="left:215px;top:536px;width:23px;height:21px;background:#b9cfee;border-bottom:1px dotted #ffffff"></div>
<div class="cb" style="left:218px;top:540px"></div>
<div class="t" style="left:245px;top:540px;width:83px;text-align:left;color:#000">1</div>
<div class="t" style="left:536px;top:540px;width:198px;text-align:left;color:#000">Синтез сплава</div>
<div class="t" style="left:742px;top:540px;width:92px;text-align:left;color:#000">Не начата</div>
<div class="t" style="left:836px;top:540px;width:112px;text-align:right;color:#000">10,000</div>
<div class="t" style="left:1120px;top:540px;width:92px;text-align:left;color:#000">01.09.2023</div>
<div class="t" style="left:1220px;top:540px;width:107px;text-align:left;color:#000">14.09.2023</div>
<div class="t" style="left:1529px;top:540px;width:93px;text-align:right;color:#000">500</div>
<div class="t" style="left:1635px;top:540px;width:92px;text-align:left;color:#000">Как можно ран...</div>
<div class="t" style="left:1835px;top:540px;width:92px;text-align:left;color:#000">Фиксированна...</div>
<div class="t" style="left:1929px;top:540px;width:95px;text-align:right;color:#000">10,00000</div>
<div style="left:215px;top:557px;width:1774px;height:21px;border-bottom:1px solid #ededed"></div>
<div class="cb" style="left:218px;top:561px"></div>
<div class="t" style="left:245px;top:561px;width:83px;text-align:left;color:#000">1</div>
<div class="t" style="left:336px;top:561px;width:92px;text-align:left;color:#000">1</div>
<div class="t" style="left:436px;top:561px;width:92px;text-align:left;color:#000">01-СГТ-001</div>
<div class="t" style="left:536px;top:561px;width:198px;text-align:left;color:#000">Согласовать состав с Заказчиком</div>
<div class="t" style="left:742px;top:561px;width:92px;text-align:left;color:#000">Выполняется</div>
<div class="t" style="left:836px;top:561px;width:112px;text-align:right;color:#000">5,000</div>
<div class="t" style="left:961px;top:561px;width:151px;text-align:left;color:#000">СГТ</div>
<div class="t" style="left:1120px;top:561px;width:92px;text-align:left;color:#000">01.09.2023</div>
<div class="t" style="left:1220px;top:561px;width:107px;text-align:left;color:#000">07.09.2023</div>
<div class="t" style="left:1529px;top:561px;width:93px;text-align:right;color:#000">500</div>
<div class="t" style="left:1635px;top:561px;width:92px;text-align:left;color:#000">Как можно ран...</div>
<div class="t" style="left:1835px;top:561px;width:92px;text-align:left;color:#000">Фиксированна...</div>
<div class="t" style="left:1929px;top:561px;width:95px;text-align:right;color:#000">5,00000</div>
<div style="left:215px;top:578px;width:1774px;height:21px;border-bottom:1px solid #ededed"></div>
<div class="cb" style="left:218px;top:582px"></div>
<div class="t" style="left:245px;top:582px;width:83px;text-align:left;color:#000">1</div>
<div class="t" style="left:336px;top:582px;width:92px;text-align:left;color:#000">2</div>
<div class="t" style="left:436px;top:582px;width:92px;text-align:left;color:#000">01-СГТ-002</div>
<div class="t" style="left:536px;top:582px;width:198px;text-align:left;color:#000">Аттестация основного и примесног...</div>
<div class="t" style="left:742px;top:582px;width:92px;text-align:left;color:#000">Не начата</div>
<div class="t" style="left:836px;top:582px;width:112px;text-align:right;color:#000">3,000</div>
<div class="t" style="left:961px;top:582px;width:151px;text-align:left;color:#000">СГТ</div>
<div class="t" style="left:1120px;top:582px;width:92px;text-align:left;color:#000">01.09.2023</div>
<div class="t" style="left:1220px;top:582px;width:107px;text-align:left;color:#000">05.09.2023</div>
<div class="t" style="left:1529px;top:582px;width:93px;text-align:right;color:#000">500</div>
<div class="t" style="left:1635px;top:582px;width:92px;text-align:left;color:#000">Как можно ран...</div>
<div class="t" style="left:1835px;top:582px;width:92px;text-align:left;color:#000">Фиксированна...</div>
<div class="t" style="left:1929px;top:582px;width:95px;text-align:right;color:#000">3,00000</div>
<div style="left:215px;top:599px;width:1774px;height:21px;border-bottom:1px solid #ededed"></div>
<div class="cb" style="left:218px;top:603px"></div>
<div class="t" style="left:245px;top:603px;width:83px;text-align:left;color:#000">1</div>
<div class="t" style="left:336px;top:603px;width:92px;text-align:left;color:#000">5</div>
<div class="t" style="left:436px;top:603px;width:92px;text-align:left;color:#000">01-СГТ-005</div>
<div class="t" style="left:536px;top:603px;width:198px;text-align:left;color:#000">Описать используемую технологию</div>
<div class="t" style="left:742px;top:603px;width:92px;text-align:left;color:#000">Не начата</div>
<div class="t" style="left:836px;top:603px;width:112px;text-align:right;color:#000">3,000</div>
<div class="t" style="left:961px;top:603px;width:151px;text-align:left;color:#000">СГТ</div>
<div class="t" style="left:1120px;top:603px;width:92px;text-align:left;color:#000">05.09.2023</div>
<div class="t" style="left:1220px;top:603px;width:107px;text-align:left;color:#000">08.09.2023</div>
<div class="t" style="left:1529px;top:603px;width:93px;text-align:right;color:#000">500</div>
<div class="t" style="left:1635px;top:603px;width:92px;text-align:left;color:#000">Как можно ран...</div>
<div class="t" style="left:1835px;top:603px;width:92px;text-align:left;color:#000">Фиксированна...</div>
<div class="t" style="left:1929px;top:603px;width:95px;text-align:right;color:#000">3,00000</div>
<div style="left:238px;top:536px;width:1px;height:84px;background:#ededed"></div>
<div style="left:329px;top:536px;width:1px;height:84px;background:#ededed"></div>
<div style="left:429px;top:536px;width:1px;height:84px;background:#ededed"></div>
<div style="left:529px;top:536px;width:1px;height:84px;background:#ededed"></div>
<div style="left:735px;top:536px;width:1px;height:84px;background:#ededed"></div>
<div style="left:835px;top:536px;width:1px;height:84px;background:#ededed"></div>
<div style="left:954px;top:536px;width:1px;height:84px;background:#ededed"></div>
<div style="left:1113px;top:536px;width:1px;height:84px;background:#ededed"></div>
<div style="left:1213px;top:536px;width:1px;height:84px;background:#ededed"></div>
<div style="left:1328px;top:536px;width:1px;height:84px;background:#ededed"></div>
<div style="left:1428px;top:536px;width:1px;height:84px;background:#ededed"></div>
<div style="left:1528px;top:536px;width:1px;height:84px;background:#ededed"></div>
<div style="left:1628px;top:536px;width:1px;height:84px;background:#ededed"></div>
<div style="left:1728px;top:536px;width:1px;height:84px;background:#ededed"></div>
<div style="left:1828px;top:536px;width:1px;height:84px;background:#ededed"></div>
<div style="left:1928px;top:536px;width:1px;height:84px;background:#ededed"></div>
<div style="left:215px;top:619px;width:1774px;height:17px;background:#f1f1f1"></div>
<svg style="position:absolute;left:221px;top:623px" width="5" height="8" viewBox="0 0 5 8"><path d="M4.5 0 V8 L0 4 Z" fill="#a3a3a3"/></svg>
<div style="left:232px;top:621px;width:1517px;height:13px;background:#c1c1c1"></div>
<div style="left:214px;top:642px;width:1775px;height:25px;background:linear-gradient(#d9e6f6,#cedff4);border-left:1px solid #99bbe8"></div>
<div style="left:214px;top:664px;width:1775px;height:1px;background:#8db2e3"></div>
<div style="left:215px;top:665px;width:1774px;height:2px;background:#deecfd"></div>
<div class="tab act" style="left:217px;top:643px;width:178px;height:21px"><div class="tabt" style="left:8px;top:4px">История изменений работы</div></div>
<div class="tab" style="left:398px;top:643px;width:168px;height:21px"><div class="tabt" style="left:8px;top:4px">Предшествующие работы</div></div>
<div class="tab" style="left:570px;top:643px;width:126px;height:21px"><div class="tabt" style="left:8px;top:4px">Трудовые ресурсы</div></div>
<div style="left:214px;top:667px;width:1775px;height:80px;background:#fff;border-left:1px solid #99bbe8"></div>
<div class="hdr" style="left:214px;top:667px;width:1775px;height:26px;border-left:1px solid #99bbe8"></div>
<div class="t b" style="left:221px;top:674px;text-align:left;color:#15428b">История изменений работы</div>
<div style="left:215px;top:693px;width:1774px;height:23px;background:linear-gradient(#f9f9f9,#e6e6e6);border-bottom:1px solid #d0d0d0"></div>
<div style="left:238px;top:693px;width:1px;height:22px;background:#d0d0d0;box-shadow:1px 0 0 #fafafa"></div>
<div style="left:338px;top:693px;width:1px;height:22px;background:#d0d0d0;box-shadow:1px 0 0 #fafafa"></div>
<div style="left:438px;top:693px;width:1px;height:22px;background:#d0d0d0;box-shadow:1px 0 0 #fafafa"></div>
<div style="left:538px;top:693px;width:1px;height:22px;background:#d0d0d0;box-shadow:1px 0 0 #fafafa"></div>
<div style="left:638px;top:693px;width:1px;height:22px;background:#d0d0d0;box-shadow:1px 0 0 #fafafa"></div>
<div style="left:778px;top:693px;width:1px;height:22px;background:#d0d0d0;box-shadow:1px 0 0 #fafafa"></div>
<div style="left:878px;top:693px;width:1px;height:22px;background:#d0d0d0;box-shadow:1px 0 0 #fafafa"></div>
<div style="left:978px;top:693px;width:1px;height:22px;background:#d0d0d0;box-shadow:1px 0 0 #fafafa"></div>
<div style="left:1078px;top:693px;width:1px;height:22px;background:#d0d0d0;box-shadow:1px 0 0 #fafafa"></div>
<div style="left:1178px;top:693px;width:1px;height:22px;background:#d0d0d0;box-shadow:1px 0 0 #fafafa"></div>
<div style="left:1278px;top:693px;width:1px;height:22px;background:#d0d0d0;box-shadow:1px 0 0 #fafafa"></div>
<div style="left:1378px;top:693px;width:1px;height:22px;background:#d0d0d0;box-shadow:1px 0 0 #fafafa"></div>
<div style="left:1478px;top:693px;width:1px;height:22px;background:#d0d0d0;box-shadow:1px 0 0 #fafafa"></div>
<div style="left:1578px;top:693px;width:1px;height:22px;background:#d0d0d0;box-shadow:1px 0 0 #fafafa"></div>
<div style="left:1678px;top:693px;width:1px;height:22px;background:#d0d0d0;box-shadow:1px 0 0 #fafafa"></div>
<div style="left:1778px;top:693px;width:1px;height:22px;background:#d0d0d0;box-shadow:1px 0 0 #fafafa"></div>
<div style="left:1878px;top:693px;width:1px;height:22px;background:#d0d0d0;box-shadow:1px 0 0 #fafafa"></div>
<div style="left:1978px;top:693px;width:1px;height:22px;background:#d0d0d0;box-shadow:1px 0 0 #fafafa"></div>
<svg style="position:absolute;left:222px;top:699px" width="10" height="10" viewBox="0 0 10 10"><path d="M1.2 5.2 L3.4 8.5 L8.7 1.8" fill="none" stroke="#111" stroke-width="1.7"/></svg>
<div class="t" style="left:245px;top:698px;width:92px;text-align:left;color:#222">Этап проекта</div>
<div class="t" style="left:345px;top:698px;width:92px;text-align:left;color:#222">Номер в проекте</div>
<div class="t" style="left:445px;top:698px;width:92px;text-align:left;color:#222">Типовая работа</div>
<div class="t" style="left:545px;top:698px;width:92px;text-align:left;color:#222">Лицевой счёт затрат</div>
<div class="t" style="left:645px;top:698px;width:132px;text-align:left;color:#222">Наименование</div>
<div class="t" style="left:785px;top:698px;width:92px;text-align:left;color:#222">Приоритет</div>
<div class="t" style="left:885px;top:698px;width:92px;text-align:left;color:#222">Ограничение</div>
<div class="t" style="left:985px;top:698px;width:92px;text-align:left;color:#222">Дата ограничения</div>
<div class="t" style="left:1085px;top:698px;width:92px;text-align:left;color:#222">Изменение длительности</div>
<div class="t" style="left:1185px;top:698px;width:92px;text-align:left;color:#222">Нормативная длительность</div>
<div class="t" style="left:1285px;top:698px;width:92px;text-align:left;color:#222">ЕИ длительности</div>
<div class="t" style="left:1385px;top:698px;width:92px;text-align:left;color:#222">Длительность плановая</div>
<div class="t" style="left:1485px;top:698px;width:92px;text-align:left;color:#222">Длительность фактическая</div>
<div class="t" style="left:1585px;top:698px;width:92px;text-align:left;color:#222">Подразделение-исполнитель</div>
<div class="t" style="left:1685px;top:698px;width:92px;text-align:left;color:#222">Внешний исполнитель</div>
<div class="t" style="left:1785px;top:698px;width:92px;text-align:left;color:#222">Выпуск</div>
<div class="t" style="left:1885px;top:698px;width:92px;text-align:left;color:#222">Объём работы плановый</div>
<div class="t" style="left:1985px;top:698px;width:3px;text-align:left;color:#222">Объём</div>
<div style="left:215px;top:717px;width:1774px;height:21px;background:#dfe8f6;border-bottom:1px dotted #ffffff"></div>
<div style="left:215px;top:717px;width:23px;height:21px;background:#b9cfee;border-bottom:1px dotted #ffffff"></div>
<div class="cb" style="left:218px;top:721px"></div>
<div class="t" style="left:245px;top:721px;width:92px;text-align:left;color:#000">1</div>
<div class="t" style="left:345px;top:721px;width:92px;text-align:left;color:#000">27</div>
<div class="t" style="left:645px;top:721px;width:132px;text-align:left;color:#000">Синтез сплава</div>
<div class="t" style="left:779px;top:721px;width:93px;text-align:right;color:#000">500</div>
<div class="t" style="left:885px;top:721px;width:92px;text-align:left;color:#000">Как можно ран...</div>
<div class="t" style="left:1085px;top:721px;width:92px;text-align:left;color:#000">Фиксированна...</div>
<div class="t" style="left:1179px;top:721px;width:93px;text-align:right;color:#000">10,00000</div>
<div class="t" style="left:1285px;top:721px;width:92px;text-align:left;color:#000">День</div>
<div class="t" style="left:1379px;top:721px;width:93px;text-align:right;color:#000">10,000</div>
<div class="t" style="left:1685px;top:721px;width:92px;text-align:left;color:#000">ЗАО МАЯК</div>
<div class="t" style="left:1879px;top:721px;width:93px;text-align:right;color:#000">1,000</div>
<div style="left:238px;top:717px;width:1px;height:21px;background:#ededed"></div>
<div style="left:338px;top:717px;width:1px;height:21px;background:#ededed"></div>
<div style="left:438px;top:717px;width:1px;height:21px;background:#ededed"></div>
<div style="left:538px;top:717px;width:1px;height:21px;background:#ededed"></div>
<div style="left:638px;top:717px;width:1px;height:21px;background:#ededed"></div>
<div style="left:778px;top:717px;width:1px;height:21px;background:#ededed"></div>
<div style="left:878px;top:717px;width:1px;height:21px;background:#ededed"></div>
<div style="left:978px;top:717px;width:1px;height:21px;background:#ededed"></div>
<div style="left:1078px;top:717px;width:1px;height:21px;background:#ededed"></div>
<div style="left:1178px;top:717px;width:1px;height:21px;background:#ededed"></div>
<div style="left:1278px;top:717px;width:1px;height:21px;background:#ededed"></div>
<div style="left:1378px;top:717px;width:1px;height:21px;background:#ededed"></div>
<div style="left:1478px;top:717px;width:1px;height:21px;background:#ededed"></div>
<div style="left:1578px;top:717px;width:1px;height:21px;background:#ededed"></div>
<div style="left:1678px;top:717px;width:1px;height:21px;background:#ededed"></div>
<div style="left:1778px;top:717px;width:1px;height:21px;background:#ededed"></div>
<div style="left:1878px;top:717px;width:1px;height:21px;background:#ededed"></div>
<div style="left:1978px;top:717px;width:1px;height:21px;background:#ededed"></div>
<div style="left:209px;top:657px;width:5px;height:31px;background:#ececec;border-radius:2px"></div>
<svg style="position:absolute;left:209px;top:668px" width="4" height="8" viewBox="0 0 4 8"><path d="M3.5 0.5 V7.5 L0.5 4 Z" fill="#333"/></svg>
<div style="left:289px;top:133px;width:185px;height:453px;background:#f0f0f0;border:1px solid #9dbbe3;box-shadow:0 2px 5px rgba(0,0,0,0.28)"></div>
<div style="left:316px;top:134px;width:1px;height:451px;background:#e0e0e0;box-shadow:1px 0 0 #fff"></div>
<div style="left:292px;top:163px;width:179px;height:1px;background:#e0e0e0;box-shadow:0 1px 0 #fff"></div>
<div style="left:292px;top:269px;width:179px;height:1px;background:#e0e0e0;box-shadow:0 1px 0 #fff"></div>
<div style="left:292px;top:300px;width:179px;height:1px;background:#e0e0e0;box-shadow:0 1px 0 #fff"></div>
<div style="left:292px;top:331px;width:179px;height:1px;background:#e0e0e0;box-shadow:0 1px 0 #fff"></div>
<div style="left:292px;top:387px;width:179px;height:1px;background:#e0e0e0;box-shadow:0 1px 0 #fff"></div>
<div style="left:292px;top:418px;width:179px;height:1px;background:#e0e0e0;box-shadow:0 1px 0 #fff"></div>
<div style="left:292px;top:524px;width:179px;height:1px;background:#e0e0e0;box-shadow:0 1px 0 #fff"></div>
<div style="left:292px;top:555px;width:179px;height:1px;background:#e0e0e0;box-shadow:0 1px 0 #fff"></div>
<div style="left:316px;top:162px;width:2px;height:3px;background:#f0f0f0"></div>
<div style="left:316px;top:268px;width:2px;height:3px;background:#f0f0f0"></div>
<div style="left:316px;top:299px;width:2px;height:3px;background:#f0f0f0"></div>
<div style="left:316px;top:330px;width:2px;height:3px;background:#f0f0f0"></div>
<div style="left:316px;top:386px;width:2px;height:3px;background:#f0f0f0"></div>
<div style="left:316px;top:417px;width:2px;height:3px;background:#f0f0f0"></div>
<div style="left:316px;top:523px;width:2px;height:3px;background:#f0f0f0"></div>
<div style="left:316px;top:554px;width:2px;height:3px;background:#f0f0f0"></div>
<div class="t" style="left:322px;top:142px;text-align:left;color:#222">Отобрать...</div>
<div class="t" style="left:380px;top:142px;width:75px;text-align:right;color:#222">F6</div>
<svg style="position:absolute;left:295px;top:140px" width="16" height="15" viewBox="0 0 16 15"><defs><linearGradient id="fn" x1="0" y1="0" x2="1" y2="0"><stop offset="0" stop-color="#2d5fa8"/><stop offset="0.5" stop-color="#7fb3ea"/><stop offset="1" stop-color="#2d5fa8"/></linearGradient></defs><path d="M0.5 0.5 H15.5 L9.5 7 V14.5 L6.5 12.5 V7 Z" fill="url(#fn)" stroke="#2a5494" stroke-width="1"/><ellipse cx="8" cy="1.5" rx="7" ry="1" fill="#b8d6f5"/></svg>
<div class="t" style="left:322px;top:173px;text-align:left;color:#222">Добавить...</div>
<div class="t" style="left:380px;top:173px;width:75px;text-align:right;color:#222">Ins</div>
<svg style="position:absolute;left:296px;top:170px" width="16" height="17" viewBox="0 0 16 17"><defs><linearGradient id="dg296170" x1="0" y1="0" x2="1" y2="1"><stop offset="0" stop-color="#ffffff"/><stop offset="1" stop-color="#dfe6ec"/></linearGradient></defs><path d="M1.5 16 H13" stroke="#d0d0d0" stroke-width="1"/><path d="M1.5 0.5 H10 L12.5 3 V15.5 H1.5 Z" fill="url(#dg296170)" stroke="#8f9ca6"/><path d="M10 0.5 V3 H12.5" fill="#fff" stroke="#8f9ca6"/></svg>
<div class="t" style="left:322px;top:198px;text-align:left;color:#222">Размножить...</div>
<div class="t" style="left:380px;top:198px;width:75px;text-align:right;color:#222">Ctrl+F3</div>
<svg style="position:absolute;left:296px;top:195px" width="16" height="17" viewBox="0 0 16 17"><defs><linearGradient id="dg296195" x1="0" y1="0" x2="1" y2="1"><stop offset="0" stop-color="#ffffff"/><stop offset="1" stop-color="#dfe6ec"/></linearGradient></defs><path d="M1.5 16 H13" stroke="#d0d0d0" stroke-width="1"/><path d="M1.5 0.5 H10 L12.5 3 V15.5 H1.5 Z" fill="url(#dg296195)" stroke="#8f9ca6"/><path d="M10 0.5 V3 H12.5" fill="#fff" stroke="#8f9ca6"/><rect x="9" y="9" width="7" height="7" rx="1" fill="#fff"/><path d="M12.5 9.5 V15.5 M9.5 12.5 H15.5" stroke="#2aa52a" stroke-width="2.2"/></svg>
<div class="t" style="left:322px;top:223px;text-align:left;color:#222;font-weight:bold;letter-spacing:0.45px">Исправить...</div>
<div class="t" style="left:380px;top:223px;width:75px;text-align:right;color:#222;font-weight:bold;letter-spacing:0.45px">F2</div>
<svg style="position:absolute;left:295px;top:220px" width="17" height="16" viewBox="0 0 17 16"><path d="M6.5 0.5 H12.5 L15.5 3.5 V13.5 H6.5 Z" fill="#f7f7f7" stroke="#9a9a9a"/><path d="M1.5 3.5 H8.5 L10.5 5.5 V15.5 H1.5 Z" fill="#fafafa" stroke="#9a9a9a"/><rect x="0.5" y="7" width="6" height="3" fill="#2f64c0"/><path d="M7 5.5 H10 M8.5 5.5 V13 M7 13 H10" stroke="#444" stroke-width="0.9"/></svg>
<div class="t" style="left:322px;top:248px;text-align:left;color:#222">Удалить</div>
<div class="t" style="left:380px;top:248px;width:75px;text-align:right;color:#222">Del</div>
<svg style="position:absolute;left:296px;top:245px" width="16" height="17" viewBox="0 0 16 17"><defs><linearGradient id="dg296245" x1="0" y1="0" x2="1" y2="1"><stop offset="0" stop-color="#ffffff"/><stop offset="1" stop-color="#dfe6ec"/></linearGradient></defs><path d="M1.5 16 H13" stroke="#d0d0d0" stroke-width="1"/><path d="M1.5 0.5 H10 L12.5 3 V15.5 H1.5 Z" fill="url(#dg296245)" stroke="#8f9ca6"/><path d="M10 0.5 V3 H12.5" fill="#fff" stroke="#8f9ca6"/><rect x="8.5" y="11" width="7.5" height="3.5" fill="#d43b3b" stroke="#fff" stroke-width="0.8"/></svg>
<div class="t" style="left:322px;top:279px;text-align:left;color:#222">Обновить</div>
<div class="t" style="left:380px;top:279px;width:75px;text-align:right;color:#222">F5</div>
<svg style="position:absolute;left:294px;top:275px" width="18" height="18" viewBox="0 0 18 18"><defs><linearGradient id="rg" x1="0" y1="0" x2="1" y2="1"><stop offset="0" stop-color="#8ae68a"/><stop offset="1" stop-color="#1f9a1f"/></linearGradient></defs><path d="M14.6 7.8 A5.6 5.6 0 0 0 4.6 7.2" fill="none" stroke="url(#rg)" stroke-width="2.6"/><path d="M1 3 L1 10 L8 10 Z" fill="#6fd86f"/><path d="M3.4 10.2 A5.6 5.6 0 0 0 13.4 10.8" fill="none" stroke="url(#rg)" stroke-width="2.6"/><path d="M17 8 L17 15 L10 8 Z" fill="#1e961e"/></svg>
<div class="t" style="left:322px;top:310px;text-align:left;color:#222">Скопировать...</div>
<div class="t" style="left:322px;top:341px;text-align:left;color:#222">Состояние</div>
<svg style="position:absolute;left:459px;top:342px" width="6" height="9" viewBox="0 0 6 9"><path d="M0.5 0 L5.5 4.5 L0.5 9 Z" fill="#4f8fe0"/></svg>
<div class="t" style="left:322px;top:366px;text-align:left;color:#222">Формирование</div>
<svg style="position:absolute;left:459px;top:367px" width="6" height="9" viewBox="0 0 6 9"><path d="M0.5 0 L5.5 4.5 L0.5 9 Z" fill="#4f8fe0"/></svg>
<div class="t" style="left:322px;top:397px;text-align:left;color:#222">Просмотр</div>
<svg style="position:absolute;left:459px;top:398px" width="6" height="9" viewBox="0 0 6 9"><path d="M0.5 0 L5.5 4.5 L0.5 9 Z" fill="#4f8fe0"/></svg>
<div class="t" style="left:322px;top:428px;text-align:left;color:#222">Расширения</div>
<svg style="position:absolute;left:459px;top:429px" width="6" height="9" viewBox="0 0 6 9"><path d="M0.5 0 L5.5 4.5 L0.5 9 Z" fill="#4f8fe0"/></svg>
<svg style="position:absolute;left:296px;top:425px" width="16" height="17" viewBox="0 0 16 17"><defs><linearGradient id="dg296425" x1="0" y1="0" x2="1" y2="1"><stop offset="0" stop-color="#ffffff"/><stop offset="1" stop-color="#dfe6ec"/></linearGradient></defs><path d="M1.5 16 H13" stroke="#d0d0d0" stroke-width="1"/><path d="M1.5 0.5 H10 L12.5 3 V15.5 H1.5 Z" fill="url(#dg296425)" stroke="#8f9ca6"/><path d="M10 0.5 V3 H12.5" fill="#fff" stroke="#8f9ca6"/><circle cx="10" cy="11" r="3.3" fill="none" stroke="#888" stroke-width="1.6" stroke-dasharray="1.5 1"/><circle cx="10" cy="11" r="1.2" fill="#999"/></svg>
<div class="t" style="left:322px;top:453px;text-align:left;color:#222">Связи</div>
<svg style="position:absolute;left:459px;top:454px" width="6" height="9" viewBox="0 0 6 9"><path d="M0.5 0 L5.5 4.5 L0.5 9 Z" fill="#4f8fe0"/></svg>
<svg style="position:absolute;left:296px;top:450px" width="16" height="17" viewBox="0 0 16 17"><defs><linearGradient id="dg296450" x1="0" y1="0" x2="1" y2="1"><stop offset="0" stop-color="#ffffff"/><stop offset="1" stop-color="#dfe6ec"/></linearGradient></defs><path d="M1.5 16 H13" stroke="#d0d0d0" stroke-width="1"/><path d="M1.5 0.5 H10 L12.5 3 V15.5 H1.5 Z" fill="url(#dg296450)" stroke="#8f9ca6"/><path d="M10 0.5 V3 H12.5" fill="#fff" stroke="#8f9ca6"/><rect x="1.5" y="10" width="7.5" height="5" rx="2.5" fill="#fff" stroke="#4a4a4a" stroke-width="1.5"/><rect x="7" y="10" width="7.5" height="5" rx="2.5" fill="none" stroke="#4a4a4a" stroke-width="1.5"/><path d="M5 12.5 H11" stroke="#333" stroke-width="1.3"/></svg>
<div class="t" style="left:322px;top:478px;text-align:left;color:#222">Обмен</div>
<svg style="position:absolute;left:459px;top:479px" width="6" height="9" viewBox="0 0 6 9"><path d="M0.5 0 L5.5 4.5 L0.5 9 Z" fill="#4f8fe0"/></svg>
<svg style="position:absolute;left:295px;top:475px" width="17" height="16" viewBox="0 0 17 16"><path d="M1.5 0.5 H8.5 L11.5 3.5 V15.5 H1.5 Z" fill="#eef2f8" stroke="#7d8fb0"/><path d="M6.5 5.5 H14.5 V15.5 H6.5 Z" fill="#f4f7fb" stroke="#7d8fb0"/><path d="M4 15 V9.5 M0.8 9.8 L4 5.8 L7.2 9.8 Z" fill="#35c935" stroke="#1c9a1c" stroke-width="1.2"/><path d="M11.5 0.5 V6.5 M8.3 6.3 L11.5 10.3 L14.7 6.3 Z" fill="#35c935" stroke="#1c9a1c" stroke-width="1.2"/><path d="M4 15 V9.5 M11.5 0.5 V6.5" stroke="#35c935" stroke-width="2.4"/></svg>
<div class="t" style="left:322px;top:503px;text-align:left;color:#222">Вид</div>
<svg style="position:absolute;left:459px;top:504px" width="6" height="9" viewBox="0 0 6 9"><path d="M0.5 0 L5.5 4.5 L0.5 9 Z" fill="#4f8fe0"/></svg>
<div class="t" style="left:322px;top:534px;text-align:left;color:#222">Панель инструментов</div>
<div class="cb" style="left:296px;top:532px"></div>
<div class="t" style="left:322px;top:565px;text-align:left;color:#222">Настройки...</div>
<div class="t" style="left:380px;top:565px;width:75px;text-align:right;color:#222">Alt+Enter</div>
<svg style="position:absolute;left:294px;top:562px" width="18" height="17" viewBox="0 0 18 17"><path d="M11.5 1.2 A3.6 3.6 0 1 0 15.8 5.5 L13.8 6 L12 4.2 L12.5 2.2 Z" fill="#c9c9c9" stroke="#8a8a8a" stroke-width="1"/><path d="M3 15 L10 8" stroke="#5b8fd6" stroke-width="4.6" stroke-linecap="round"/><path d="M3.3 14.7 L9.7 8.3" stroke="#a7c6f0" stroke-width="1.6" stroke-linecap="round"/></svg>
<div style="left:287px;top:162px;width:187px;height:32px;border:5px solid #ff0000;border-radius:10px"></div>
<div style="left:292px;top:167px;width:177px;height:22px;border:1px solid #d8d8d8;border-radius:3px"></div>
</body></html>
